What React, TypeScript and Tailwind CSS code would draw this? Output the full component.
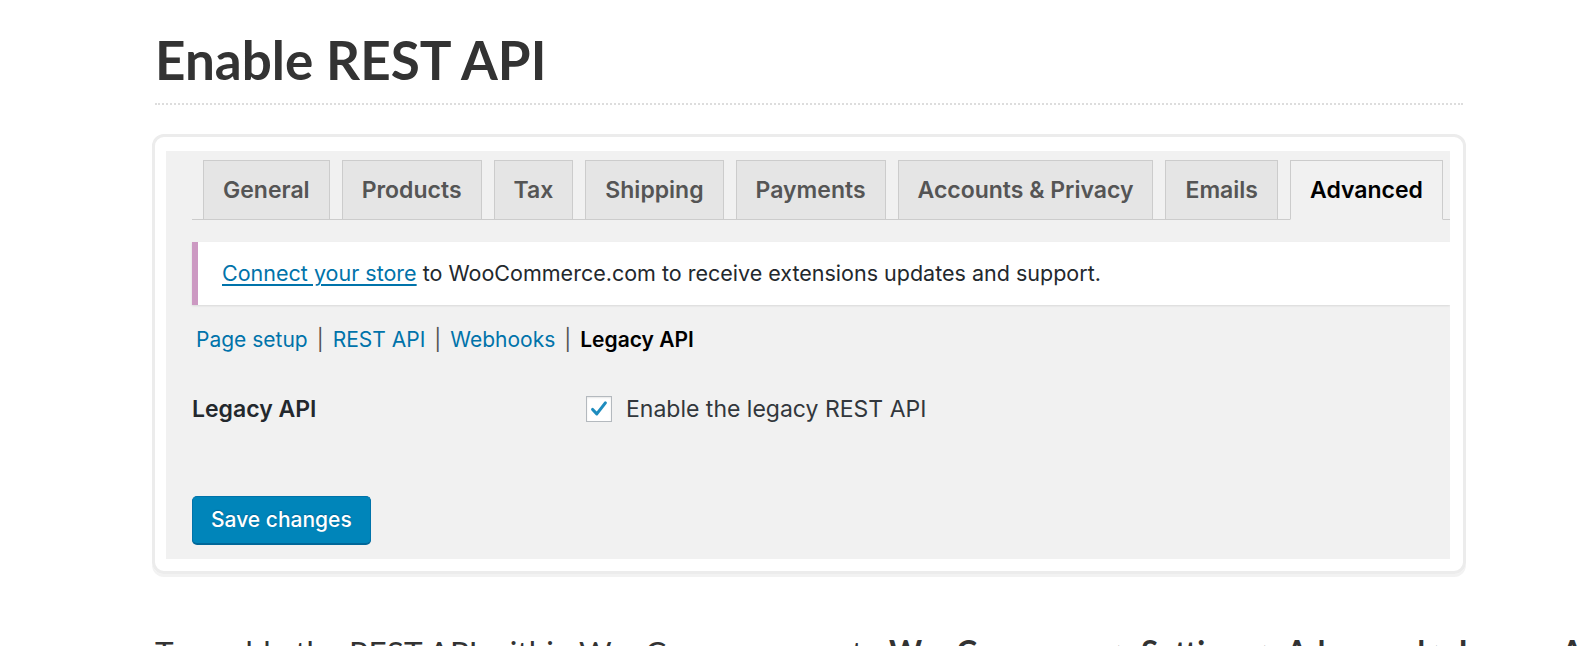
import React from 'react';

const tabs = ['General', 'Products', 'Tax', 'Shipping', 'Payments', 'Accounts & Privacy', 'Emails', 'Advanced'];

const uiFont = { fontFamily: 'Inter, "Noto Sans", sans-serif' };

const CheckIcon = () => (
  <svg viewBox="0 0 20 20" className="w-[22px] h-[22px]">
    <path d="M4.2 10.4 L8 14.4 L15.8 4.4" fill="none" stroke="#1e8cbe" strokeWidth="2.8" strokeLinecap="round" strokeLinejoin="round" />
  </svg>
);

const App = () => {
  return <div className="bg-white w-[1582px] h-[646px] overflow-hidden" style={{ fontFamily: 'Lato, "Liberation Sans", sans-serif' }}>
      <div className="ml-[152px] w-[1314px]">
        {/* Heading */}
        <div className="px-[3px] pt-[33px]">
          <h1 className="text-[53px] leading-none font-bold text-[#333] pb-[17px] border-b-2 border-dotted border-[#ddd]">
            Enable REST API
          </h1>
        </div>

        {/* Screenshot card */}
        <div className="mt-[29px] border-[3px] border-[#ececec] rounded-[12px] pt-[14px] pl-[11px] pr-[13px] pb-[12px] shadow-[0_3px_0_#f2f2f2]">
          <div className="bg-[#f1f1f1] h-[408px] pl-[26px] pt-[9px] overflow-hidden" style={uiFont}>
            {/* Tabs */}
            <div className="flex flex-nowrap items-end gap-[12px] pl-[11px] border-b border-[#ccc]">
              {tabs.map(tab => tab === 'Advanced' ? <div key={tab} className="h-[60px] -mb-px flex items-center px-[19px] border border-[#ccc] border-b-[#f1f1f1] bg-[#f1f1f1] text-[23px] font-semibold text-black whitespace-nowrap">
                    {tab}
                  </div> : <div key={tab} className="h-[59px] flex items-center px-[19px] border border-b-0 border-[#ccc] bg-[#e5e5e5] text-[23px] font-semibold text-[#555] whitespace-nowrap">
                    {tab}
                  </div>)}
            </div>

            {/* Notice */}
            <div className="mt-[22px] h-[63px] flex items-center border-l-[6px] border-[#cc99c2] bg-white pl-[24px] shadow-[0_1px_2px_rgba(0,0,0,0.1)] text-[21.5px] text-[#23282d]">
              <span>
                <a href="#" className="text-[#0073aa] underline underline-offset-[3px]">Connect your store</a> to WooCommerce.com to receive extensions updates and support.
              </span>
            </div>

            {/* Sub navigation */}
            <div className="mt-[20px] pl-[4px] text-[21px] leading-[30px] text-[#555]">
              <a href="#" className="text-[#0073aa]">Page setup</a>
              <span className="mx-[9px]">|</span>
              <a href="#" className="text-[#0073aa]">REST API</a>
              <span className="mx-[9px]">|</span>
              <a href="#" className="text-[#0073aa]">Webhooks</a>
              <span className="mx-[9px]">|</span>
              <span className="font-semibold text-black">Legacy API</span>
            </div>

            {/* Setting row */}
            <div className="mt-[39px] flex items-center leading-[30px]">
              <div className="w-[394px] text-[23px] font-semibold text-[#23282d]">Legacy API</div>
              <label className="flex items-center gap-[14px] text-[23px] text-[#32373c]">
                <span className="w-[26px] h-[26px] border border-[#b4b9be] bg-white flex items-center justify-center shadow-[inset_0_1px_2px_rgba(0,0,0,0.1)]">
                  <CheckIcon />
                </span>
                Enable the legacy REST API
              </label>
            </div>

            {/* Save */}
            <button className="mt-[72px] h-[48px] px-[18px] rounded-[5px] bg-[#0085ba] border border-[#0073aa] border-b-[#006799] shadow-[0_1px_0_#006799] text-white text-[21px] font-medium [text-shadow:0_-1px_1px_#006799]">
              Save changes
            </button>
          </div>
        </div>

        {/* Body text */}
        <p className="mt-[55px] px-[3px] text-[31.5px] leading-[46px] text-[#333] whitespace-nowrap">
          To enable the REST API within WooCommerce, go to <strong className="font-bold">WooCommerce &gt; Settings &gt; Advanced &gt; Legacy API</strong>
        </p>
      </div>
    </div>;
};

export default App;
